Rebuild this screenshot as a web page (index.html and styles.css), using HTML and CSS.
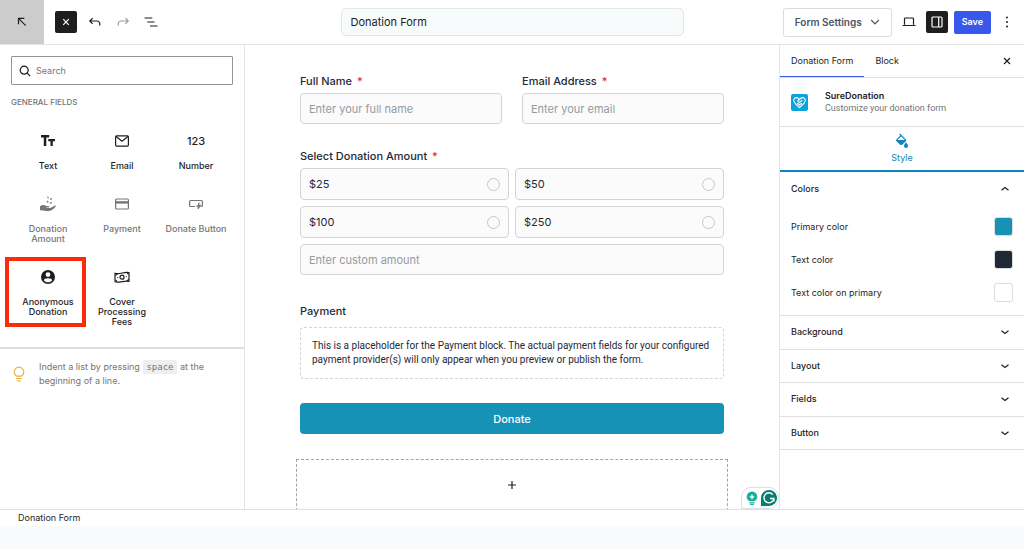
FILE: index.html
```html
<!DOCTYPE html>
<html lang="en">
<head>
<meta charset="utf-8">
<title>Donation Form</title>
<meta name="viewport" content="width=device-width, initial-scale=1">
<link rel="stylesheet" href="styles.css">
</head>
<body>
<div class="editor">
  <header class="topbar">
    <div class="topbar-left">
      <button class="back" aria-label="Back"><svg width="12" height="12" viewBox="0 0 12 12" class="line"><path d="M2.5 8.2V2.3h5.8M2.7 2.6l7 7"/></svg></button>
      <button class="square dark" aria-label="Close inserter"><svg width="10" height="10" viewBox="0 0 10 10" class="line"><path d="M2.2 2.2l5.6 5.6M7.8 2.2L2.2 7.8"/></svg></button>
      <button class="tool" aria-label="Undo"><svg width="14" height="14" viewBox="0 0 14 14" class="line"><path d="M4.6 3.2L1.8 6l2.8 2.8M2 6h6.600c2 0 3.200 1 3.200 3v1.600"/></svg></button>
      <button class="tool faded" aria-label="Redo"><svg width="14" height="14" viewBox="0 0 14 14" class="line"><path d="M9.400 3.200L12.200 6 9.400 8.800M12 6H5.400c-2 0-3.200 1-3.200 3v1.600"/></svg></button>
      <button class="tool" aria-label="Document overview"><svg width="14" height="14" viewBox="0 0 14 14" class="line"><path d="M.5 3h7.800M3.300 7h7.200M6 11h7.500"/></svg></button>
    </div>
    <input class="title" type="text" aria-label="Form title" value="Donation Form">
    <div class="topbar-right">
      <button class="settings">Form Settings <svg width="10" height="10" viewBox="0 0 10 10" class="line"><path d="M1.200 3L5 7l3.800-4"/></svg></button>
      <button class="tool" aria-label="Preview"><svg width="14" height="14" viewBox="0 0 14 14" class="line"><path d="M2.500 9.800V3.800q0-.8.8-.8h7.400q.8 0 .8.8v6M.5 10.500h13"/></svg></button>
      <button class="square dark" aria-label="Settings panel"><svg width="12" height="12" viewBox="0 0 12 12" class="line"><rect x="1" y="1" width="10" height="10" rx="1"/><path d="M7.700 1v10"/></svg></button>
      <button class="save">Save</button>
      <button class="more" aria-label="Options"><svg width="4" height="12" viewBox="0 0 4 12"><circle cx="2" cy="1.500" r="1"/><circle cx="2" cy="6" r="1"/><circle cx="2" cy="10.500" r="1"/></svg></button>
    </div>
  </header>

  <div class="workspace">
    <aside class="inserter">
      <label class="search">
        <svg width="12" height="12" viewBox="0 0 12 12" class="line"><circle cx="5.200" cy="5.200" r="4"/><path d="M8.200 8.200l3 3"/></svg>
        <input type="search" placeholder="Search" aria-label="Search">
      </label>
      <h2 class="group-title">GENERAL FIELDS</h2>
      <div class="blocks">
        <button class="block"><svg width="20" height="20" viewBox="0 0 20 20"><path d="M3 4h8.200v2.400H8.300V15H5.800V6.400H3zM10.300 8h6.700v2.200h-2.200V15h-2.300v-4.800h-2.200z"/></svg><span>Text</span></button>
        <button class="block"><svg width="20" height="20" viewBox="0 0 20 20" class="line"><rect x="3.600" y="4.900" width="12.800" height="10.200" rx="1"/><path d="M4 5.500l6 4.800 6-4.800"/></svg><span>Email</span></button>
        <button class="block"><b class="digits">123</b><span>Number</span></button>
        <button class="block off"><svg width="20" height="20" viewBox="0 0 20 20"><path d="M2 12.200c2-1.200 3.600-1.600 5-.7 1 .6 2 .5 3.500.6 1 .1.900 1.400 0 1.400H8.200v.5h3.300c2-.2 3.600-1.500 4.900-2.300 1-.5 1.800.3 1.100 1.100-1.700 1.900-3.800 3.900-6.500 4.200-3 .3-5.500-1-9-.8z"/><path d="M9.500 2.300l1.200.9-.2 1.600-1.200-1zM14 4l-2 .5.100 1.300 1.700-.4zM9.100 6.500l1.500.9-.6 1.500-1.300-1zM14 7.800l-2 .8-.2 1.500 1.900-.8z"/></svg><span>Donation Amount</span></button>
        <button class="block off"><svg width="20" height="20" viewBox="0 0 20 20" class="line"><rect x="3.600" y="5" width="12.800" height="10" rx="1"/><path d="M4 8.400h12" stroke-width="2.400"/></svg><span>Payment</span></button>
        <button class="block off"><svg width="20" height="20" viewBox="0 0 20 20" class="line"><path d="M9 12.500H4.600q-1 0-1-1v-4q0-1 1-1h10.800q1 0 1 1v4q0 1-1 1h-.6M13.200 8.600l-1 2.700h2.200l-2.300 3.400.3-2.500h-1.900"/></svg><span>Donate Button</span></button>
        <button class="block marked"><svg width="20" height="20" viewBox="0 0 20 20"><path fill-rule="evenodd" d="M10 3a7 7 0 100 14 7 7 0 000-14zm0 2.200a2.400 2.400 0 110 4.800 2.400 2.400 0 010-4.800zm0 6c2.300 0 4.200.9 4.200 2-.9 1.300-2.500 2.100-4.200 2.100s-3.300-.8-4.200-2.100c0-1.100 1.900-2 4.200-2z"/></svg><span>Anonymous Donation</span></button>
        <button class="block"><svg width="20" height="20" viewBox="0 0 20 20" class="line"><path d="M3 6.200c4.700 1.500 9.300-1.800 14-.5v8.600c-4.700-1.300-9.300 2-14 .5z"/><circle cx="10" cy="10.200" r="2"/><path d="M5.600 10.300v.8M14.400 9.300v.8M3.500 8.500l2-1.600M14.800 14l2-1.600M3.500 13l1.500 1.600M15 5.700l1.500 1.700"/></svg><span>Cover Processing Fees</span></button>
      </div>
      <div class="tip">
        <svg width="14" height="18" viewBox="0 0 14 18" class="line"><path d="M4.700 11.200C3 10.200 2.200 8.800 2.200 7a4.800 4.800 0 019.600 0c0 1.800-.8 3.200-2.500 4.200zM4.300 13.500h5.400M5.300 15.800h3.400"/></svg>
        <p>Indent a list by pressing <kbd>space</kbd> at the beginning of a line.</p>
      </div>
    </aside>

    <main class="canvas">
      <form class="form">
        <div class="pair">
          <div class="field"><label for="name">Full Name <i>*</i></label><input id="name" class="box" type="text" placeholder="Enter your full name"></div>
          <div class="field"><label for="email">Email Address <i>*</i></label><input id="email" class="box" type="email" placeholder="Enter your email"></div>
        </div>
        <fieldset class="amounts">
          <legend>Select Donation Amount <i>*</i></legend>
          <div class="options">
            <label class="option">$25 <input type="radio" name="amount"></label>
            <label class="option">$50 <input type="radio" name="amount"></label>
            <label class="option">$100 <input type="radio" name="amount"></label>
            <label class="option">$250 <input type="radio" name="amount"></label>
            <input class="box custom" type="text" placeholder="Enter custom amount" aria-label="Custom amount">
          </div>
        </fieldset>
        <section class="payment">
          <h3>Payment</h3>
          <p>This is a placeholder for the Payment block. The actual payment fields for your configured payment provider(s) will only appear when you preview or publish the form.</p>
        </section>
        <button class="donate" type="button">Donate</button>
        <button class="appender" type="button" aria-label="Add block"><svg width="10" height="10" viewBox="0 0 10 10" class="line"><path d="M5 1v8M1 5h8"/></svg></button>
      </form>
      <div class="assistant">
        <svg width="12" height="15" viewBox="0 0 12 15"><path fill="#15b097" d="M6 .5a5.300 5.300 0 015.300 5.300c0 2-1 3.400-2.500 4.200H3.200C1.700 9.200.7 7.800.7 5.800A5.300 5.300 0 016 .5zM3.300 10.800h5.400v1H3.300zM3.500 12.500h5c-.2 1-1 1.500-2.500 1.500s-2.300-.5-2.500-1.500z"/><path fill="#fff" d="M6 3l.9 2 2 .9-2 .9L6 8.800l-.9-2-2-.9 2-.9z"/></svg>
        <svg width="16" height="16" viewBox="0 0 16 16"><path fill="#087e70" d="M8 0a8 8 0 11.100 16H0V8a8 8 0 018-8z"/><path fill="none" stroke="#fff" stroke-width="1.400" d="M11.800 4.600a5 5 0 101.100 3.900H9M12.900 8.500v3"/></svg>
      </div>
    </main>

    <aside class="inspector">
      <div class="tabs">
        <button class="tab active">Donation Form</button>
        <button class="tab">Block</button>
        <button class="close" aria-label="Close panel"><svg width="10" height="10" viewBox="0 0 10 10" class="line"><path d="M2 2l6 6M8 2L2 8"/></svg></button>
      </div>
      <div class="card">
        <svg width="17" height="17" viewBox="0 0 17 17"><rect width="17" height="17" rx="2" fill="#06a4db"/><path fill="none" stroke="#fff" stroke-width="1.100" stroke-linecap="round" stroke-linejoin="round" d="M8.500 13.600L3.800 9C1.600 6.600 3 3.600 5.300 3.600c1.400 0 2.300.7 3.200 1.700L6.800 7l1.700 1.700L11 6.300M8.500 5.300c.9-1 1.800-1.700 3.200-1.700 2.300 0 3.700 3 1.500 5.400l-4.700 4.600M6.500 9.300l2 1.700 2-1.700"/></svg>
        <div><h2>SureDonation</h2><p>Customize your donation form</p></div>
      </div>
      <button class="style-tab"><svg width="14" height="16" viewBox="0 0 14 16"><path fill="none" stroke="#0f86bb" stroke-width="1.100" stroke-linejoin="round" d="M1.500 7.200L6.200 2.500l4.600 4.700M4.500 1l1.700 1.500"/><path fill="#0f86bb" d="M1 7h10.300c0 .6-.2 1-.6 1.400l-3.600 3.400c-.6.500-1.300.5-1.900 0L1.600 8.400C1.200 8 1 7.600 1 7zM11 9.200c1.300 1.700 2 2.600 2 3.700a2 2 0 01-4 0c0-1.100.7-2 2-3.700z"/></svg>Style</button>
      <section class="colors">
        <button class="panel-head">Colors <svg width="10" height="10" viewBox="0 0 10 10" class="line"><path d="M1.500 6.300L5 3.500l3.500 2.800"/></svg></button>
        <div class="color">Primary color <button class="swatch primary" aria-label="Primary color"></button></div>
        <div class="color">Text color <button class="swatch ink" aria-label="Text color"></button></div>
        <div class="color">Text color on primary <button class="swatch" aria-label="Text color on primary"></button></div>
      </section>
      <div class="panels">
        <button class="panel-head">Background <svg width="10" height="10" viewBox="0 0 10 10" class="line"><path d="M1.500 3.700L5 6.500l3.500-2.800"/></svg></button>
        <button class="panel-head">Layout <svg width="10" height="10" viewBox="0 0 10 10" class="line"><path d="M1.500 3.700L5 6.500l3.500-2.800"/></svg></button>
        <button class="panel-head">Fields <svg width="10" height="10" viewBox="0 0 10 10" class="line"><path d="M1.500 3.700L5 6.500l3.500-2.800"/></svg></button>
        <button class="panel-head">Button <svg width="10" height="10" viewBox="0 0 10 10" class="line"><path d="M1.500 3.700L5 6.500l3.500-2.800"/></svg></button>
      </div>
    </aside>
  </div>
  <footer class="crumbs">Donation Form</footer>
</div>
</body>
</html>
```

FILE: styles.css
```css
*, *::after { box-sizing: border-box; }
body {
  margin: 0;
  background: #f7fbfc;
  color: #1e1e1e;
  font: 9px/12px Inter, "Liberation Sans", sans-serif;
}
button, input { font: inherit; color: inherit; }
button { border: 0; padding: 0; background: none; }
h2, h3, p { margin: 0; font-weight: 400; }
svg { display: block; flex: none; fill: currentColor; }
.line { fill: none; stroke: currentColor; stroke-width: 1.2; }

.editor {
  display: flex;
  flex-direction: column;
  height: 100vh;
  padding-bottom: 23px;
}

.topbar {
  display: grid;
  grid-template-columns: 1fr 343px 1fr;
  align-items: center;
  flex: none;
  height: 45px;
  border-bottom: 1px solid #e4e4e4;
  background: #fff;
}
.topbar-left, .topbar-right { display: flex; align-items: center; }
.topbar-left { gap: 14px; }
.topbar-right { justify-content: flex-end; gap: 6px; padding-right: 15px; }
.back {
  display: grid;
  place-items: center;
  width: 44px;
  height: 44px;
  margin-right: -3px;
  background: #ccc;
}
.square {
  display: grid;
  place-items: center;
  width: 22px;
  height: 22px;
  border-radius: 2px;
}
.topbar-left .square { margin-right: -3px; }
.dark { background: #1e1e1e; color: #fff; }
.tool { padding: 0; }
.faded { color: #999; }
.title {
  height: 28px;
  padding: 0 9px;
  border: 1px solid #e2e6e8;
  border-radius: 5px;
  background: #f7fbfc;
  font-size: 11px;
}
.settings {
  display: flex;
  align-items: center;
  gap: 8px;
  height: 29px;
  margin-right: 4px;
  padding: 0 11px;
  border: 1px solid #d9dce0;
  border-radius: 3px;
  color: #475569;
  font-size: 10px;
  font-weight: 600;
}
.topbar-right .square { margin-left: 4px; }
.save {
  height: 23px;
  padding: 0 8px;
  border-radius: 2px;
  background: #3858e9;
  color: #fff;
  font-weight: 600;
}
.more { margin-left: 8px; }

.workspace {
  display: grid;
  grid-template-columns: 245px minmax(0, 1fr) 245px;
  flex: 1;
  min-height: 0;
  background: #fff;
}

.inserter { border-right: 1px solid #e4e4e4; overflow: hidden; }
.search {
  display: flex;
  align-items: center;
  gap: 5px;
  height: 29px;
  margin: 11px 11px 0;
  padding: 0 7px;
  border: 1px solid #949494;
  border-radius: 1px;
}
.search input {
  flex: 1;
  min-width: 0;
  border: 0;
  padding: 0;
  outline: 0;
  background: none;
}
.search input::placeholder { color: #757575; opacity: 1; }
.group-title {
  margin: 11px 11px 13px;
  color: #757575;
  font-size: 8px;
  font-weight: 500;
}
.blocks {
  display: grid;
  grid-template-columns: repeat(3, 1fr);
  gap: 2px 0;
  padding: 0 11px 9px;
}
.block {
  position: relative;
  display: flex;
  flex-direction: column;
  align-items: center;
  gap: 10px;
  padding: 10px 2px 11px;
  font-size: 9px;
  font-weight: 500;
  line-height: 10px;
}
.off { color: #757575; }
.digits { font-size: 11px; font-weight: 500; line-height: 20px; }
.marked::after {
  content: "";
  position: absolute;
  inset: 0 -1px auto -6px;
  height: 70px;
  border: 4px solid #fb2a0c;
}
.tip {
  display: flex;
  gap: 13px;
  padding: 11px 24px 0 12px;
  border-top: 2px solid #ddd;
  color: #757575;
  line-height: 14px;
}
.tip svg { margin-top: 5px; color: #edb23e; }
.tip kbd {
  display: inline-block;
  margin: 0 1px;
  padding: 0 3px;
  border-radius: 1px;
  background: #eee;
  font: 9px/14px "DejaVu Sans Mono", monospace;
}

.canvas { position: relative; overflow: hidden; }
.form {
  display: flex;
  flex-direction: column;
  padding: 28px 55px 0;
  color: #1f2937;
  font-size: 11px;
  line-height: 16px;
}
.pair { display: grid; grid-template-columns: 1fr 1fr; gap: 20px; }
.field { display: flex; flex-direction: column; gap: 4px; min-width: 0; }
.field label, .amounts legend { font-weight: 500; }
.form i { margin-left: 2px; color: #dc2626; font-style: normal; }
.box {
  width: 100%;
  height: 31px;
  padding: 0 8px;
  border: 1px solid #d1d5d8;
  border-radius: 4px;
  background: #fbfbfb;
}
.box::placeholder { color: #949aa3; opacity: 1; }
.amounts { margin: 24px 0 0; padding: 0; border: 0; min-width: 0; }
.amounts legend { padding: 0; }
.options {
  display: grid;
  grid-template-columns: 1fr 1fr;
  gap: 6px;
  margin-top: 4px;
}
.option {
  display: flex;
  align-items: center;
  justify-content: space-between;
  height: 32px;
  padding: 0 8px;
  border: 1px solid #d1d5d8;
  border-radius: 4px;
  background: #fbfbfb;
}
.option input {
  appearance: none;
  width: 13px;
  height: 13px;
  margin: 0;
  border: 1px solid #c3c7cb;
  border-radius: 50%;
}
.custom { grid-column: 1 / -1; }
.payment { margin: 28px 0 24px; }
.payment h3 { font-size: 11px; font-weight: 500; }
.payment p {
  margin-top: 8px;
  padding: 11px;
  border: 1px dashed #d1d5d8;
  border-radius: 4px;
  font-family: Roboto, "Liberation Sans", sans-serif;
  font-size: 10px;
  line-height: 14px;
}
.donate {
  height: 31px;
  border-radius: 4px;
  background: #1792b7;
  color: #fff;
  font-weight: 500;
}
.appender {
  display: grid;
  place-items: center;
  height: 52px;
  margin: 25px -4px 0;
  border: 1px dashed #a3a3a3;
  color: #1e1e1e;
}
.assistant {
  position: absolute;
  right: 0;
  bottom: 0;
  display: flex;
  align-items: center;
  gap: 3px;
  height: 22px;
  padding: 0 1px 0 4px;
  border: 1px solid #dcdfe3;
  border-radius: 10px 10px 10px 0;
  background: #fff;
}

.inspector { border-left: 1px solid #e4e4e4; overflow: hidden; }
.tabs {
  display: flex;
  height: 33px;
  border-bottom: 1px solid #e0e0e0;
}
.tab { padding: 0 11px; }
.active { box-shadow: inset 0 -1px #3858e9; }
.close { margin-left: auto; padding: 0 12px; }
.card {
  display: flex;
  align-items: center;
  gap: 17px;
  height: 49px;
  padding: 0 11px;
  border-bottom: 1px solid #e0e0e0;
}
.card h2 { font-size: 9px; font-weight: 600; }
.card p { color: #757575; font-family: Roboto, "Liberation Sans", sans-serif; }
.style-tab {
  display: flex;
  flex-direction: column;
  align-items: center;
  justify-content: center;
  gap: 3px;
  width: 100%;
  height: 45px;
  border-bottom: 2px solid #0f86bb;
  color: #0f86bb;
}
.panel-head {
  display: flex;
  align-items: center;
  justify-content: space-between;
  width: 100%;
  height: 34px;
  padding: 0 14px 0 11px;
  font-weight: 500;
}
.colors { padding-bottom: 6px; }
.color {
  display: flex;
  align-items: center;
  justify-content: space-between;
  height: 33px;
  padding: 0 11px;
}
.colors .panel-head + .color { margin-top: 4px; }
.swatch {
  width: 19px;
  height: 19px;
  border: 1px solid #dcdcdc;
  border-radius: 3px;
}
.primary { background: #1792b7; }
.ink { background: #1f2937; }
.panels {
  display: grid;
  grid-auto-rows: 1fr;
  height: 135px;
  border-bottom: 1px solid #ddd;
}
.panels .panel-head { height: auto; border-top: 1px solid #e0e0e0; }

.crumbs {
  flex: none;
  height: 17px;
  padding: 2px 18px;
  border-top: 1px solid #e0e0e0;
  background: #fff;
}
```
